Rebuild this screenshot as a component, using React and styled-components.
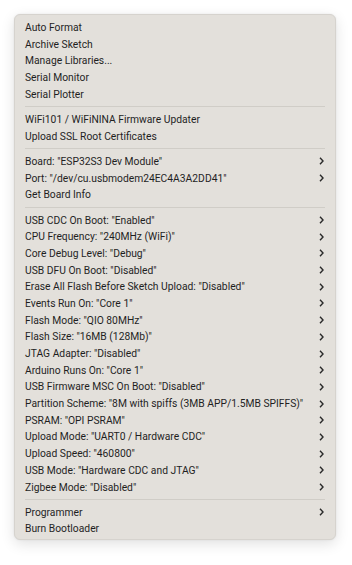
import React from 'react';
import styled, { createGlobalStyle } from 'styled-components';

const Global = createGlobalStyle`
  html, body {
    margin: 0;
    padding: 0;
    background: #ffffff;
  }
  body {
    font-family: Roboto, "Liberation Sans", Arial, sans-serif;
    -webkit-font-smoothing: antialiased;
  }
`;

const Page = styled.div`
  width: 352px;
  height: 565px;
  padding: 14px 0 0 14px;
  box-sizing: border-box;
`;

const Menu = styled.div`
  width: 322px;
  height: 526px;
  box-sizing: border-box;
  padding: 4px 0;
  background: #e3e0db;
  border: 1px solid #d6d3ce;
  border-radius: 6px;
  box-shadow: 0 4px 14px rgba(0, 0, 0, 0.12), 0 0 2px rgba(0, 0, 0, 0.08);
  display: flex;
  flex-direction: column;
`;

const Row = styled.div`
  height: 16.7px;
  flex-shrink: 0;
  display: flex;
  align-items: center;
  justify-content: space-between;
  padding: 0 11px 0 10px;
  font-size: 10.3px;
  color: #1f1f1f;
  white-space: nowrap;
`;

const Separator = styled.div`
  height: 1px;
  flex-shrink: 0;
  margin: 3.8px 10px 3.8px 10px;
  background: #d0cdc7;
`;

const Chevron = () => (
  <svg width="5" height="8" viewBox="0 0 5 8">
    <path d="M1 0.8 L4 4 L1 7.2" fill="none" stroke="#2a2a2a" strokeWidth="1.4" />
  </svg>
);

const groups = [
  [
    ['Auto Format'],
    ['Archive Sketch'],
    ['Manage Libraries...'],
    ['Serial Monitor'],
    ['Serial Plotter'],
  ],
  [
    ['WiFi101 / WiFiNINA Firmware Updater'],
    ['Upload SSL Root Certificates'],
  ],
  [
    ['Board: "ESP32S3 Dev Module"', true],
    ['Port: "/dev/cu.usbmodem24EC4A3A2DD41"', true],
    ['Get Board Info'],
  ],
  [
    ['USB CDC On Boot: "Enabled"', true],
    ['CPU Frequency: "240MHz (WiFi)"', true],
    ['Core Debug Level: "Debug"', true],
    ['USB DFU On Boot: "Disabled"', true],
    ['Erase All Flash Before Sketch Upload: "Disabled"', true],
    ['Events Run On: "Core 1"', true],
    ['Flash Mode: "QIO 80MHz"', true],
    ['Flash Size: "16MB (128Mb)"', true],
    ['JTAG Adapter: "Disabled"', true],
    ['Arduino Runs On: "Core 1"', true],
    ['USB Firmware MSC On Boot: "Disabled"', true],
    ['Partition Scheme: "8M with spiffs (3MB APP/1.5MB SPIFFS)"', true],
    ['PSRAM: "OPI PSRAM"', true],
    ['Upload Mode: "UART0 / Hardware CDC"', true],
    ['Upload Speed: "460800"', true],
    ['USB Mode: "Hardware CDC and JTAG"', true],
    ['Zigbee Mode: "Disabled"', true],
  ],
  [
    ['Programmer', true],
    ['Burn Bootloader'],
  ],
];

export default function App() {
  return (
    <Page>
      <Global />
      <Menu>
        {groups.map((items, gi) => (
          <React.Fragment key={gi}>
            {gi > 0 && <Separator />}
            {items.map(([label, sub]) => (
              <Row key={label}>
                <span>{label}</span>
                {sub && <Chevron />}
              </Row>
            ))}
          </React.Fragment>
        ))}
      </Menu>
    </Page>
  );
}
